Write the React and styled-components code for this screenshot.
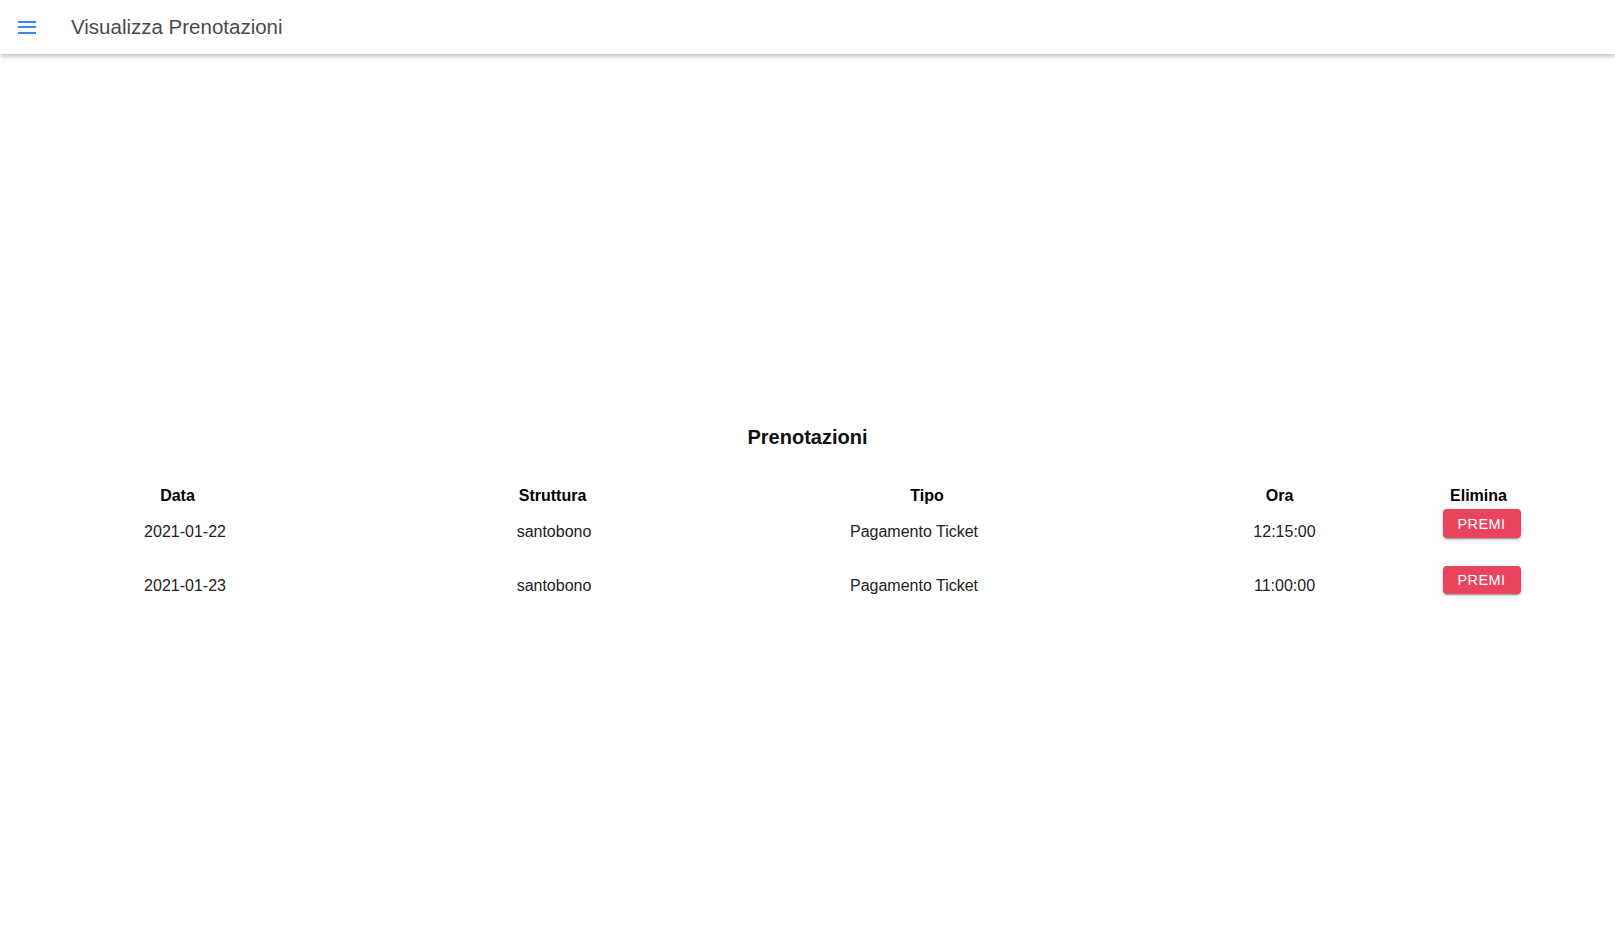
import React from 'react';
import styled, {createGlobalStyle} from 'styled-components';

const GlobalStyle = createGlobalStyle`
    html, body {
        margin: 0;
        padding: 0;
        background: #fff;
        font-family: "Liberation Sans", Arial, sans-serif;
    }
`;

const AppBar = styled.header`
    height: 54px;
    display: flex;
    align-items: center;
    background: #fff;
    box-shadow: 0 2px 4px -1px rgba(0,0,0,0.2), 0 4px 5px 0 rgba(0,0,0,0.1);
    position: relative;
`;

const MenuButton = styled.button`
    border: none;
    background: none;
    padding: 0;
    margin-left: 18px;
    width: 18px;
    height: 13px;
    display: flex;
    flex-direction: column;
    justify-content: space-between;
    cursor: pointer;
    span {
        display: block;
        height: 2px;
        background: #4285f4;
    }
`;

const BarTitle = styled.h1`
    margin: 0 0 0 35px;
    font-size: 20.5px;
    font-weight: 400;
    color: #4a4a4a;
    line-height: 24px;
    padding-bottom: 1px;
`;

const Content = styled.main`
    padding-top: 371px;
`;

const Title = styled.h2`
    margin: 0;
    text-align: center;
    font-size: 20px;
    line-height: 24px;
    font-weight: 700;
    color: #111;
`;

const Row = styled.div`
    display: grid;
    grid-template-columns: ${p => p.$cols};
    align-items: start;
    margin-top: ${p => p.$top || 0}px;
`;

/* cells centre their content even when it is wider than the track */
const Cell = styled.div`
    display: flex;
    justify-content: center;
    white-space: nowrap;
    font-size: 16px;
    line-height: 20px;
    font-weight: ${p => p.$head ? 700 : 400};
    color: ${p => p.$head ? '#000' : '#222'};
    padding-top: ${p => p.$pad || 0}px;
`;

const DeleteButton = styled.button`
    font-family: "Liberation Sans", Arial, sans-serif;
    font-size: 14.5px;
    letter-spacing: 0.4px;
    color: #fff;
    background: #ea435d;
    border: none;
    border-radius: 4px;
    width: 78px;
    height: ${p => p.$h}px;
    padding: 0;
    flex-shrink: 0;
    box-shadow: 0 3px 1px -2px rgba(0,0,0,0.2), 0 2px 2px 0 rgba(0,0,0,0.14), 0 1px 5px 0 rgba(0,0,0,0.12);
    cursor: pointer;
`;

const headCols = '355px 395px 354px 351px 47px';
const bodyCols = '370px 368px 352px 389px 5px';

const bookings = [
    {id: 1, data: '2021-01-22', struttura: 'santobono', tipo: 'Pagamento Ticket', ora: '12:15:00', top: 3, pad: 13, h: 29},
    {id: 2, data: '2021-01-23', struttura: 'santobono', tipo: 'Pagamento Ticket', ora: '11:00:00', top: 24, pad: 10, h: 28},
];

export default function App() {
    const rows = bookings.map((b) => (
        <Row key={b.id} $cols={bodyCols} $top={b.top}>
            <Cell $pad={b.pad}>{b.data}</Cell>
            <Cell $pad={b.pad}>{b.struttura}</Cell>
            <Cell $pad={b.pad}>{b.tipo}</Cell>
            <Cell $pad={b.pad}>{b.ora}</Cell>
            <Cell><DeleteButton $h={b.h}>PREMI</DeleteButton></Cell>
        </Row>
    ));

    return (<>
        <GlobalStyle />
        <AppBar>
            <MenuButton aria-label="menu"><span /><span /><span /></MenuButton>
            <BarTitle>Visualizza Prenotazioni</BarTitle>
        </AppBar>
        <Content>
            <Title>Prenotazioni</Title>
            <Row $cols={headCols} $top={37}>
                <Cell $head>Data</Cell>
                <Cell $head>Struttura</Cell>
                <Cell $head>Tipo</Cell>
                <Cell $head>Ora</Cell>
                <Cell $head>Elimina</Cell>
            </Row>
            {rows}
        </Content>
    </>);
}
